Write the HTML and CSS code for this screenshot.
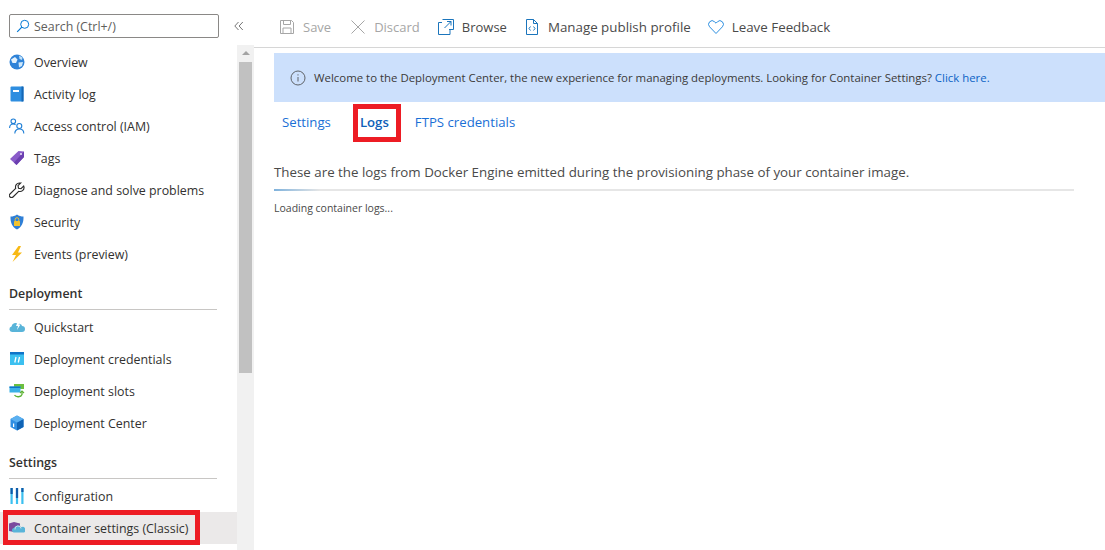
FILE: index.html
```html
<!DOCTYPE html>
<html lang="en">
<head>
<meta charset="utf-8">
<title>Deployment Center</title>
<link rel="stylesheet" href="styles.css">
</head>
<body>
<div class="page">
  <aside class="sidebar">
    <div class="search-row">
      <div class="search">
        <svg class="search-icon" width="14" height="14" viewBox="0 0 14 14"><circle cx="8.700" cy="5.300" r="4" fill="none" stroke="#0078d4" stroke-width="1"/><path d="M5.800 8.200 1.200 12.800" stroke="#0078d4" stroke-width="1.200"/></svg>
        <span>Search (Ctrl+/)</span>
      </div>
      <svg class="collapse" width="10" height="10" viewBox="0 0 10 10"><path d="M4.500 1 .8 5l3.700 4M8.800 1 5.100 5l3.700 4" fill="none" stroke="#767676" stroke-width="1"/></svg>
    </div>
    <div class="side-body">
      <nav class="nav">
        <a class="item"><svg class="ic" viewBox="0 0 16 16"><circle cx="8" cy="8" r="7.500" fill="#2f83d8"/><path d="M2 5.500 6 3l2.500 2.500L7 9 3.500 9z" fill="#e3f1fc"/><path d="M10 1.500l3.500 2-.5 2.500-2.500-1z" fill="#bfe0f8"/><path d="M9.500 8.500l4.500-.5-1 4-3 1.500z" fill="#cfe8fa"/></svg>Overview</a>
        <a class="item"><svg class="ic" viewBox="0 0 16 16"><rect x="1.500" y="0.500" width="13" height="15" rx="1" fill="#2e8ee0"/><rect x="12.500" y="0.500" width="2" height="15" fill="#1567b5"/><rect x="4" y="4" width="6" height="2" fill="#fff"/></svg>Activity log</a>
        <a class="item"><svg class="ic" viewBox="0 0 16 16" fill="none" stroke="#1f7fd6" stroke-width="1.100"><circle cx="4.300" cy="3.300" r="2.300"/><path d="M.6 10c0-2.500 1.500-4 3.700-4 1 0 1.700.3 2.300.8"/><circle cx="10.300" cy="8" r="2.500"/><path d="M5.800 15.500c0-2.700 1.800-4.500 4.500-4.500s4.500 1.800 4.500 4.500"/></svg>Access control (IAM)</a>
        <a class="item"><svg class="ic" viewBox="0 0 16 16"><path d="M9.500 1 15 1.500 15 7 7.500 15 1 9z" fill="#8a5cc9"/><path d="M15 1.500 15 7 7.500 15 5 12.500z" fill="#6b3fb0"/><circle cx="12" cy="4" r="1.100" fill="#e6dcf5"/></svg>Tags</a>
        <a class="item"><svg class="ic" viewBox="0 0 16 16"><path d="M10.500 1a4 4 0 0 0-3.800 5.300L1 12a2 2 0 0 0 3 3l5.700-5.700A4 4 0 0 0 15 5l-.3-1-2.700 2.700-2.500-.5-.5-2.500L11.700 1z" fill="#fff" stroke="#2b2b2b" stroke-width="1.100"/></svg>Diagnose and solve problems</a>
        <a class="item"><svg class="ic" viewBox="0 0 16 16"><path d="M8 .5c2 1.500 4 2 6.500 2 .2 6-1.500 10.500-6.500 13C3 13 1.300 8.500 1.500 2.500 4 2.500 6 2 8 .5z" fill="#2f7fd6"/><rect x="5" y="7" width="6" height="5" rx=".5" fill="#f2c230"/><path d="M6.200 7V5.500a1.800 1.800 0 0 1 3.600 0V7" fill="none" stroke="#f2c230" stroke-width="1"/></svg>Security</a>
        <a class="item"><svg class="ic" viewBox="0 0 16 16"><path d="M9.500 0 3 9h4l-3.500 7L13 6.500H9L12 0z" fill="#f8b914"/></svg>Events (preview)</a>
        <div class="head">Deployment</div>
        <a class="item"><svg class="ic" viewBox="0 0 16 16"><path d="M3 13A2.800 2.800 0 0 1 2.500 7.500 4 4 0 0 1 9 5a3 3 0 0 1 4 2 3 3 0 0 1 0 6z" fill="#59b4d9"/><path d="M9 2 7 7h2L8 11l3.500-5.500H9.500L11 2z" fill="#fff"/></svg>Quickstart</a>
        <a class="item"><svg class="ic" viewBox="0 0 16 16"><rect x="1" y="1" width="14" height="13" fill="#3cc0f0"/><rect x="1" y="1" width="14" height="2.500" fill="#0f74c8"/><path d="M7 6 5.800 11.500M10.500 6 9.300 11.500" stroke="#fff" stroke-width="1.300"/></svg>Deployment credentials</a>
        <a class="item"><svg class="ic" viewBox="0 0 16 16"><rect x="5" y="1" width="10" height="5" fill="#6cbf3f"/><rect x="0.500" y="3.500" width="11" height="6" fill="#3bb1e6"/><rect x="0.500" y="3.500" width="11" height="1.500" fill="#0f74c8"/><path d="M5.500 12a4 3 0 0 0 7.500-.5V9" fill="none" stroke="#5db234" stroke-width="1.300"/><path d="M11 10l2-2 2 2" fill="none" stroke="#5db234" stroke-width="1.200"/></svg>Deployment slots</a>
        <a class="item"><svg class="ic" viewBox="0 0 16 16"><path d="M8 .5 14.500 4v8L8 15.500 1.500 12V4z" fill="#2f8fe3"/><path d="M8 7.500 14.500 4v8L8 15.500z" fill="#0f63b5"/><path d="M8 .5 14.500 4 8 7.500 1.500 4z" fill="#5bb0f0"/><rect x="4" y="8.500" width="1.200" height="3.500" fill="#fff"/></svg>Deployment Center</a>
        <div class="head">Settings</div>
        <a class="item"><svg class="ic" viewBox="0 0 16 16"><rect x="1.500" y="0" width="2.200" height="16" fill="#3cc0f0"/><rect x="6.900" y="0" width="2.200" height="16" fill="#3cc0f0"/><rect x="12.300" y="0" width="2.200" height="16" fill="#3cc0f0"/><rect x="1.500" y="0" width="2.200" height="6" fill="#0f5aa8"/><rect x="6.900" y="0" width="2.200" height="10" fill="#0f5aa8"/><rect x="12.300" y="0" width="2.200" height="4" fill="#0f5aa8"/></svg>Configuration</a>
        <a class="item selected"><svg class="ic" viewBox="0 0 16 16"><path d="M0 3.500 5 2l6 1.500V11L5 12 0 11z" fill="#7b4a9e"/><path d="M4.500 12.500a2.500 2.500 0 0 1 .7-4.800 4 4 0 0 1 7-.5 3 3 0 0 1 2.800 5.300z" fill="#59b4d9"/><path d="M6 9.500a3 3 0 0 1 6-1" fill="none" stroke="#ebe9e9" stroke-width=".8"/></svg>Container settings (Classic)</a>
      </nav>
      <div class="scrollbar">
        <div class="arrow"></div>
        <div class="thumb"></div>
      </div>
    </div>
  </aside>
  <main class="main">
    <div class="toolbar">
      <span class="tool off"><svg class="tic" viewBox="0 0 16 16" fill="none" stroke="#a6a6a6" stroke-width="1"><path d="M1.500 1.500h11l2 2v11h-13z"/><path d="M4.500 1.500v4h7v-4M4 14.500V9h8v5.500"/></svg>Save</span>
      <span class="tool off"><svg class="tic" viewBox="0 0 16 16" fill="none" stroke="#a6a6a6" stroke-width="1"><path d="M1.500 1.500l13 13M14.500 1.500l-13 13"/></svg>Discard</span>
      <span class="tool"><svg class="tic" viewBox="0 0 16 16" fill="none" stroke="#1b75bc" stroke-width="1"><path d="M4 3.500H.5v12H12V11"/><path d="M4.500 .5h11v10H11"/><path d="M6.500 9 13 2.500M9 2.500h4V6.500"/></svg>Browse</span>
      <span class="tool wide"><svg class="tic" viewBox="0 0 16 16" fill="none" stroke="#1b75bc" stroke-width="1"><path d="M2.500 .5h7l4 4v11h-11zM9.500 .5v4h4"/><path d="M6.500 7.500 5 9.500l1.500 2M9.500 7.500l1.500 2-1.500 2"/></svg>Manage publish profile</span>
      <span class="tool wide"><svg class="tic" viewBox="0 0 16 16" fill="none" stroke="#2d8fe0" stroke-width="1"><path d="M8 14.500 1.600 7.800a3.600 3.600 0 0 1 0-5 3.500 3.500 0 0 1 5 0L8 4.200l1.400-1.400a3.500 3.500 0 0 1 5 0 3.600 3.600 0 0 1 0 5z"/></svg>Leave Feedback</span>
    </div>
    <div class="content">
      <div class="banner">
        <svg class="info" width="16" height="16" viewBox="0 0 16 16" fill="none" stroke="#5f6368" stroke-width="1"><circle cx="8" cy="8" r="7"/><path d="M8 7v4.500M8 4.300v1.200"/></svg>
        <span>Welcome to the Deployment Center, the new experience for managing deployments. Looking for Container Settings? <a class="link">Click here.</a></span>
      </div>
      <div class="tabs">
        <span class="tab">Settings</span>
        <span class="tab active">Logs</span>
        <span class="tab">FTPS credentials</span>
      </div>
      <p class="desc">These are the logs from Docker Engine emitted during the provisioning phase of your container image.</p>
      <div class="progress"><div class="bar"></div></div>
      <p class="loading">Loading container logs...</p>
    </div>
  </main>
</div>
<div class="mark mark-logs"></div>
<div class="mark mark-side"></div>
</body>
</html>
```
FILE: styles.css
```css
* { box-sizing: border-box; }
html, body { margin: 0; height: 100%; overflow: hidden; background: #fff; }
body { font-family: "Open Sans", "Noto Sans", "Liberation Sans", sans-serif; font-size: 12.4px; color: #323130; position: relative; }
.page { display: flex; height: 550px; }
.sidebar { width: 254px; flex: none; display: flex; flex-direction: column; }
.search-row { height: 45px; flex: none; display: flex; align-items: flex-start; padding: 14px 0 0 9px; }
.search { width: 210px; height: 24px; border: 1px solid #8a8886; border-radius: 2px; display: flex; align-items: center; padding-left: 6px; color: #605e5c; }
.search-icon { margin-right: 4px; flex: none; }
.collapse { margin: 7px 0 0 15px; }
.side-body { flex: 1; display: flex; min-height: 0; }
.nav { width: 237px; flex: none; padding-top: 1px; }
.item { height: 32px; display: flex; align-items: center; padding-left: 9px; white-space: nowrap; }
.item.selected { background: #ebe9e9; }
.ic { width: 16px; height: 16px; margin-right: 9px; flex: none; }
.head { height: 40px; margin: 0 20px 1px 9px; padding-top: 15px; line-height: 18px; border-bottom: 1px solid #c8c6c4; font-weight: 600; color: #323130; }
.scrollbar { width: 17px; flex: none; background: #f1f1f1; padding: 0 2px; display: flex; flex-direction: column; }
.arrow { height: 17px; position: relative; }
.arrow::after { content: ""; position: absolute; left: 3px; top: 6px; border: 4px solid transparent; border-top: 0; border-bottom: 4px solid #a3a3a3; }
.thumb { height: 311px; background: #c1c1c1; }
.main { flex: 1; min-width: 0; display: flex; flex-direction: column; }
.toolbar { height: 48px; flex: none; border-bottom: 1px solid #d6d6d6; display: flex; align-items: center; gap: 18px; padding: 6px 0 0 25px; font-size: 13px; }
.tool { display: inline-flex; align-items: center; white-space: nowrap; color: #4a4a4a; }
.tool.off { color: #a6a6a6; }
.tool.off + .tool.off { margin-left: 1px; }
.tool.wide { font-size: 13.350px; margin-left: -1px; }
.tic { width: 16px; height: 16px; margin-right: 8px; flex: none; }
.content { padding: 5px 0 0 20px; }
.banner { height: 49px; background: #cce0fc; display: flex; align-items: center; padding-left: 16px; font-size: 11.420px; color: #3b3a39; }
.info { margin-right: 8px; flex: none; }
.link { color: #0b63c5; }
.tabs { height: 40px; display: flex; align-items: center; gap: 25px; padding-left: 8px; font-size: 13.200px; color: #1a6fd6; }
.tab.active { font-weight: 600; color: #0f5fb8; margin: 0 1px 0 4px; }
.desc { margin: 21px 0 0; line-height: 18px; font-size: 13.330px; color: #4a4a4a; }
.progress { width: 800px; height: 2px; margin-top: 8px; background: #e6e6e6; }
.bar { width: 46px; height: 2px; background: linear-gradient(90deg, #7fb2dc, #e6e6e6); }
.loading { margin: 10px 0 0; font-size: 10.500px; line-height: 14px; color: #4a4a4a; }
.mark { position: absolute; border: 5px solid #ed1c24; }
.mark-logs { left: 353px; top: 104px; width: 48px; height: 38px; }
.mark-side { left: 3px; top: 510px; width: 197px; height: 35px; }
```
